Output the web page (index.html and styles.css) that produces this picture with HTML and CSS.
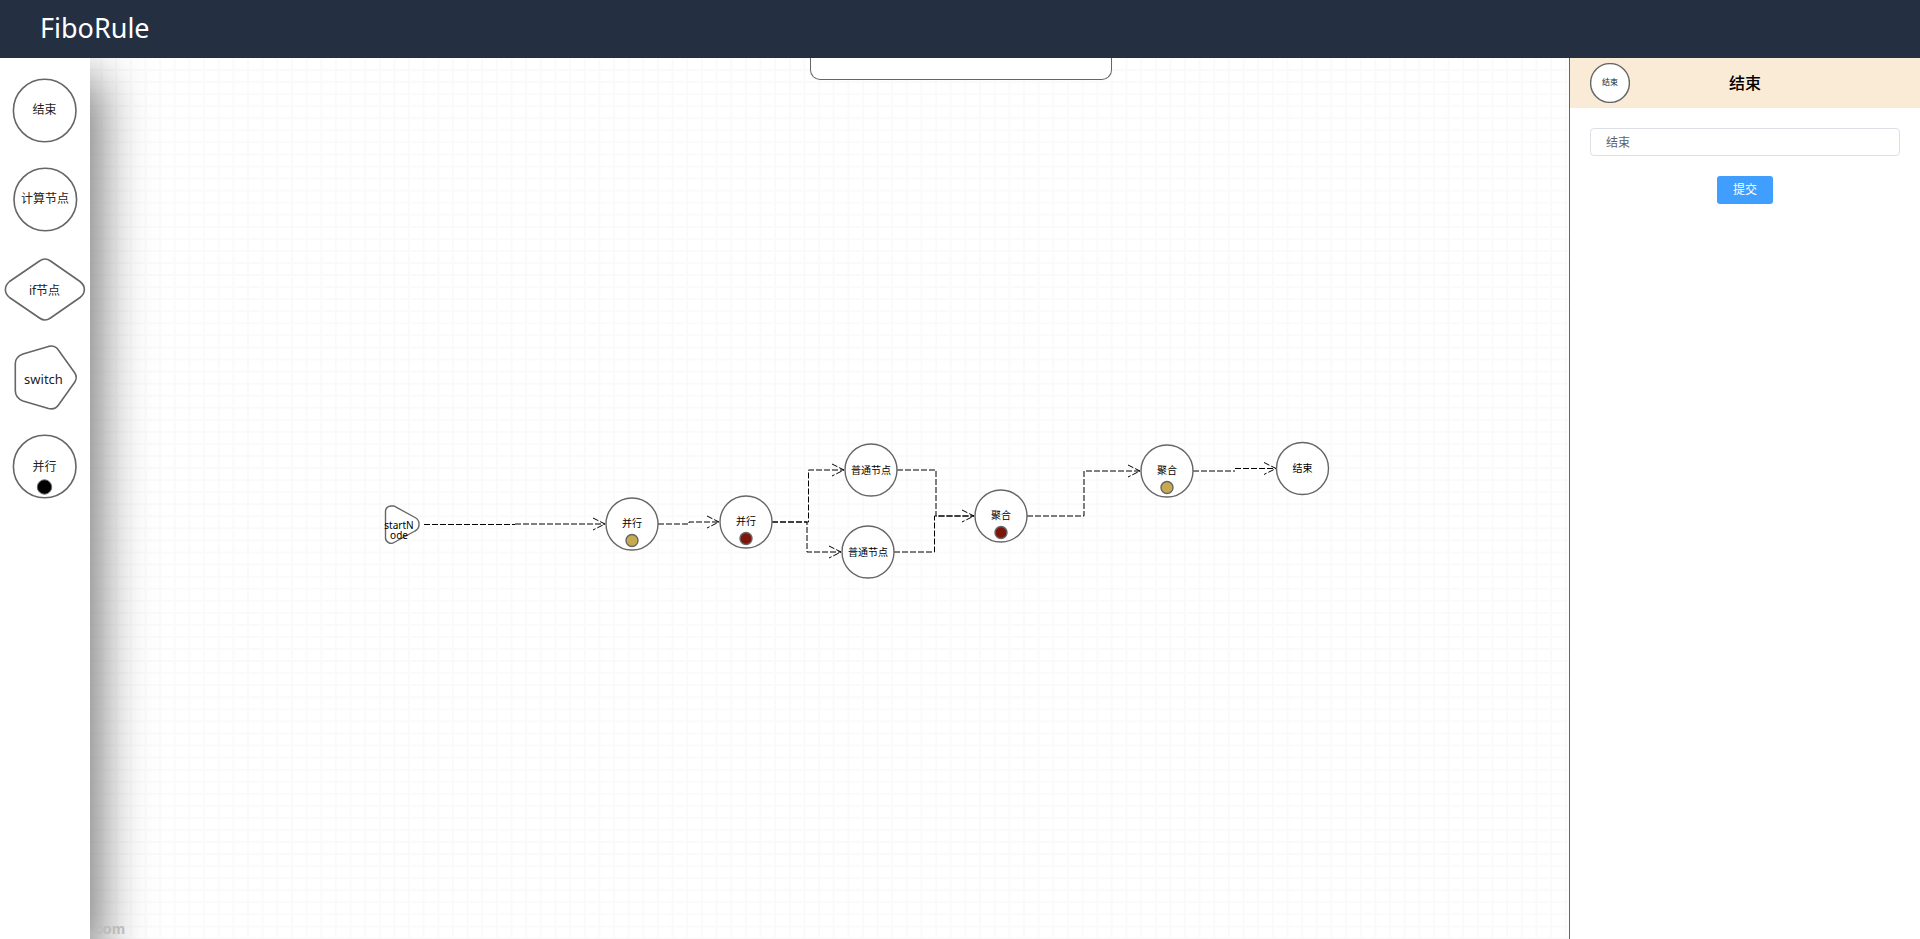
FILE: index.html
```html
<!DOCTYPE html>
<html lang="zh-CN">
<head>
<meta charset="utf-8">
<title>FiboRule</title>
<link rel="stylesheet" href="styles.css">
</head>
<body>
<header class="topbar"><h1 class="brand">FiboRule</h1></header>
<main class="workspace">
  <nav class="palette">
    <button class="tool" type="button"><svg class="tool-icon" viewBox="0 0 80 64">
      <circle class="shape" cx="39.700" cy="32.500" r="31.300"/><text class="tool-text" x="39.500" y="36">结束</text></svg></button>
    <button class="tool" type="button"><svg class="tool-icon" viewBox="0 0 80 64">
      <circle class="shape" cx="40.300" cy="32.500" r="31.300"/><text class="tool-text" x="40" y="36">计算节点</text></svg></button>
    <button class="tool" type="button"><svg class="tool-icon" viewBox="0 0 80 64">
      <path class="shape" d="M34.500 5Q40 1 45.500 5L75 25.500C80.800 30 80.800 37 75 41.500L45.500 62Q40 66 34.500 62L4.500 41.500C-1 37 -1 30 4.500 25.500Z"/><text class="tool-text" x="39.500" y="39">if节点</text></svg></button>
    <button class="tool" type="button"><svg class="tool-icon" viewBox="0 0 80 64">
      <path class="shape" d="M43.500 1.400Q49.500 0 53 4.500L69.500 27.500Q73 32.500 69.500 37.500L53.500 60Q50 65 43.500 63.500L18 56Q10.300 53 10.300 45.500V18.500Q10.300 12 18 9Z"/><text class="tool-text tool-text-large" x="38.500" y="38.500">switch</text></svg></button>
    <button class="tool" type="button"><svg class="tool-icon" viewBox="0 0 80 64">
      <circle class="shape" cx="39.700" cy="32.500" r="31.300"/><circle class="tool-dot" cx="39.500" cy="53" r="7.200"/><text class="tool-text" x="39.500" y="36.500">并行</text></svg></button>
  </nav>
  <section class="canvas">
    <div class="canvas-bar"></div>
    <svg class="graph">
      <g transform="translate(-90 -58)">
        <g class="edges">
          <path d="M424 524.500H515"/><path d="M515 524H605"/>
          <path d="M658 524H689V522H719"/>
          <path d="M772 522H808.500V470H844"/>
          <path d="M772 522H807V552H841"/>
          <path d="M897 470H936V516H974"/>
          <path d="M894 552H934.500V516H974"/>
          <path d="M1027 516H1084V471H1140"/>
          <path d="M1193 471H1235"/><path d="M1235 468.500H1276"/>
          <path d="M593 518L605 524L593 530"/>
          <path d="M707 516L719 522L707 528"/>
          <path d="M832 464L844 470L832 476"/>
          <path d="M829 546L841 552L829 558"/>
          <path d="M962 510L974 516L962 522"/>
          <path d="M1128 465L1140 471L1128 477"/>
          <path d="M1264 462.500L1276 468.500L1264 474.500"/>
        </g>
        <path class="node-shape" d="M385.500 511Q386 506.500 391 506H394L415 517.500Q419.500 520 419 524.500Q419 529 415 531L394 542.500Q392 544 389 543Q385.500 541 385.500 538Z"/>
        <text class="node-text" x="399" y="529">startN</text><text class="node-text" x="399" y="539">ode</text>
        <circle class="node-shape" cx="632" cy="524" r="26"/><text class="node-text" x="632" y="527">并行</text><circle class="dot-gold" cx="632" cy="540.500" r="6"/>
        <circle class="node-shape" cx="746" cy="522" r="26"/><text class="node-text" x="746" y="525">并行</text><circle class="dot-red" cx="746" cy="538.500" r="6"/>
        <circle class="node-shape" cx="871" cy="470" r="26"/><text class="node-text" x="871" y="474">普通节点</text>
        <circle class="node-shape" cx="868" cy="552" r="26"/><text class="node-text" x="868" y="556">普通节点</text>
        <circle class="node-shape" cx="1001" cy="516" r="26"/><text class="node-text" x="1001" y="519">聚合</text><circle class="dot-red" cx="1001" cy="532.500" r="6"/>
        <circle class="node-shape" cx="1167" cy="471" r="26"/><text class="node-text" x="1167" y="474">聚合</text><circle class="dot-gold" cx="1167" cy="487.500" r="6"/>
        <circle class="node-shape" cx="1302.500" cy="468.500" r="26"/><text class="node-text" x="1302.500" y="471.500">结束</text>
      </g>
    </svg>
    <span class="watermark">.com</span>
  </section>
  <aside class="panel">
    <div class="panel-head">
      <svg class="panel-icon" viewBox="0 0 40 40"><circle class="node-shape" cx="20" cy="20" r="19.400"/><text class="panel-icon-text" x="20" y="22">结束</text></svg>
      <h2 class="panel-title">结束</h2>
    </div>
    <form class="panel-form">
      <input class="field" type="text" value="结束" aria-label="节点名称">
      <button class="submit" type="button">提交</button>
    </form>
  </aside>
</main>
</body>
</html>
```
FILE: styles.css
```css
* { box-sizing: border-box; }
body {
  margin: 0;
  min-height: 100vh;
  display: flex;
  flex-direction: column;
  font-family: "Noto Sans", "Noto Sans CJK SC", sans-serif;
  background: #fff;
}
.topbar {
  position: relative;
  z-index: 2;
  height: 58px;
  padding: 0 40px;
  background: #242f42;
}
.brand { margin: 0; font-size: 27px; line-height: 56px; font-weight: 400; color: #fff; }
.workspace { flex: 1; display: flex; overflow: hidden; }
.palette {
  z-index: 1;
  width: 90px;
  flex: none;
  padding-top: 20px;
  display: flex;
  flex-direction: column;
  align-items: center;
  gap: 25px;
  background: #fff;
  box-shadow: 10px 20px 50px #777;
}
.tool { padding: 0; border: 0; background: none; cursor: grab; }
.tool-icon { display: block; width: 80px; height: 64px; overflow: visible; }
.shape { fill: #fff; stroke: #666; stroke-width: 1.6; }
.tool-text {
  font-family: "Noto Sans", "Noto Sans CJK SC", sans-serif;
  font-size: 12px;
  text-anchor: middle;
  fill: #222;
}
.tool-text-large { font-size: 13px; }
.tool-dot { fill: #000; stroke: #666; stroke-width: 1; }
.canvas {
  position: relative;
  flex: 1;
  min-width: 0;
  background-image:
    linear-gradient(to right, #fafafa 2px, transparent 2px),
    linear-gradient(to bottom, #fafafa 2px, transparent 2px);
  background-size: calc(100% / 101) calc(100% / 73);
  background-position: -4px -1px;
}
.canvas-bar {
  position: absolute;
  top: 0;
  left: calc(50vw - 240px);
  width: 302px;
  height: 22px;
  border: 1px solid #666;
  border-top: 0;
  border-radius: 0 0 10px 10px;
  background: #fff;
}
.graph { position: absolute; inset: 0; width: 100%; height: 100%; }
.edges { fill: none; stroke: #000; stroke-width: 1; stroke-dasharray: 6 2; }
.node-shape { fill: #fff; stroke: #666; stroke-width: 1.4; }
.node-text { font-size: 10px; text-anchor: middle; fill: #000; }
.dot-gold { fill: #c7a94f; stroke: #666; stroke-width: 1.4; }
.dot-red { fill: #7d150b; stroke: #666; stroke-width: 1.4; }
.watermark {
  position: absolute;
  left: 0;
  bottom: 0;
  font: bold 15px/20px "Liberation Sans", sans-serif;
  color: #bbb;
  z-index: 2;
}
.panel { flex: none; width: 351px; border-left: 1px solid #666; background: #fff; }
.panel-head {
  height: 50px;
  padding: 0 20px;
  display: grid;
  grid-template-columns: 40px 1fr 40px;
  align-items: center;
  background: #faebd7;
}
.panel-icon { width: 40px; height: 40px; }
.panel-icon-text { font-size: 8px; text-anchor: middle; fill: #222; }
.panel-title { margin: 0; font-size: 16px; line-height: 24px; font-weight: 500; text-align: center; }
.panel-form {
  padding: 20px;
  display: flex;
  flex-direction: column;
  align-items: center;
  gap: 20px;
}
.field {
  width: 100%;
  height: 28px;
  padding: 0 15px;
  border: 1px solid #dcdfe6;
  border-radius: 4px;
  font: 12px/26px "Noto Sans", "Noto Sans CJK SC", sans-serif;
  color: #606266;
}
.submit {
  height: 28px;
  padding: 0 16px;
  border: 0;
  border-radius: 3px;
  background: #409eff;
  font: 12px/28px "Noto Sans", "Noto Sans CJK SC", sans-serif;
  color: #fff;
}
```
